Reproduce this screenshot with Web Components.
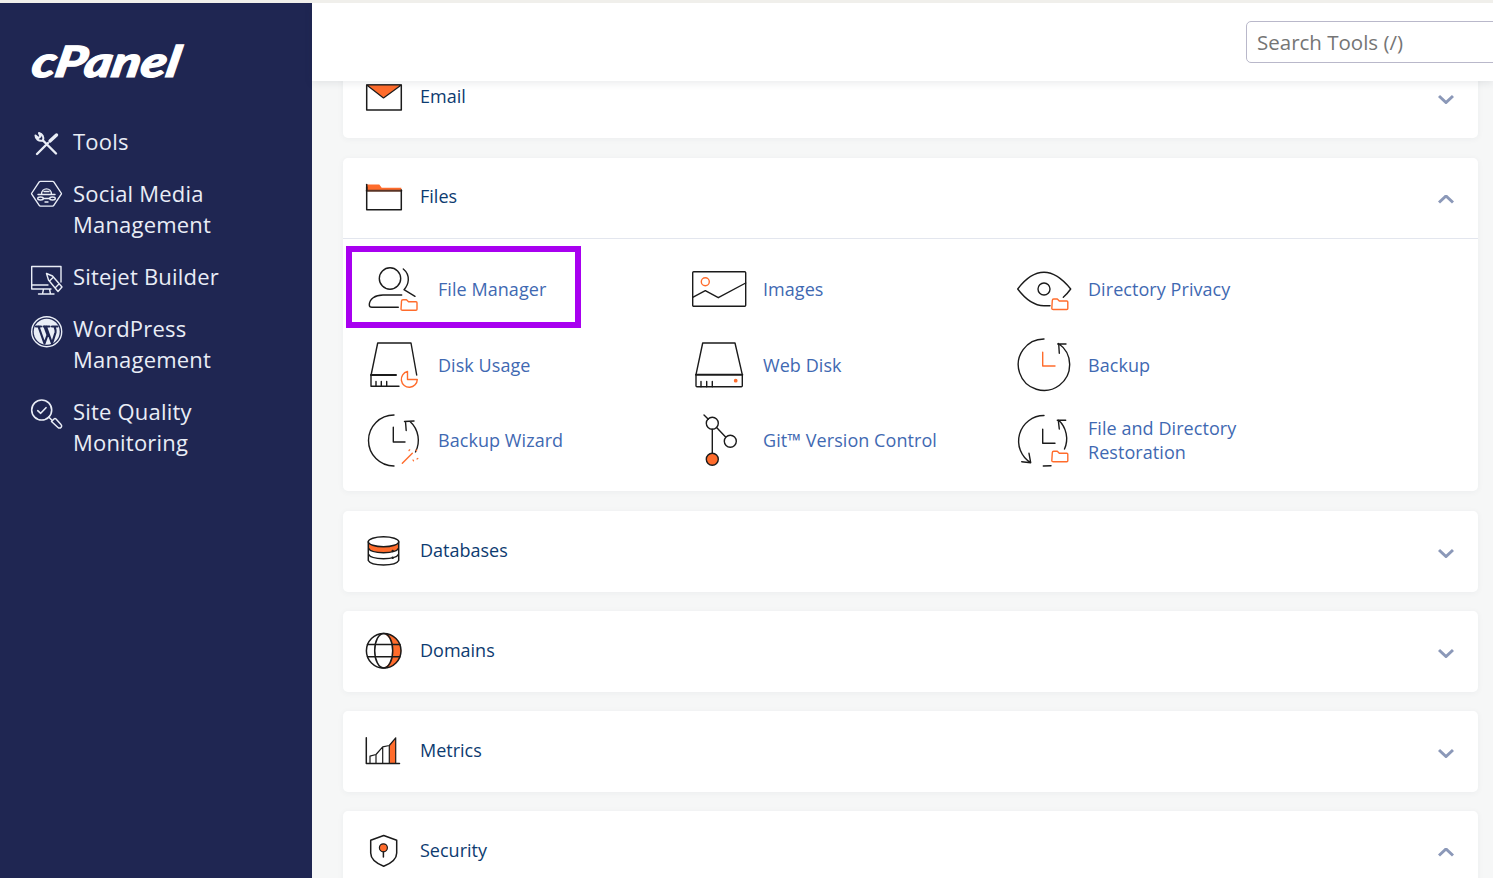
<!DOCTYPE html>
<html lang="en">
<head>
<meta charset="utf-8">
<title>cPanel - Tools</title>
<style>
html, body { margin: 0; height: 878px; overflow: hidden; }
body {
  padding-top: 3px;
  box-sizing: border-box;
  background: #f0efeb;
  font-family: "Open Sans", "Liberation Sans", sans-serif;
}
</style>
</head>
<body>
<cp-app>
  <cp-sidebar slot="side">
    <cp-nav-item icon="tools">Tools</cp-nav-item>
    <cp-nav-item icon="social">Social Media<br>Management</cp-nav-item>
    <cp-nav-item icon="sitejet">Sitejet Builder</cp-nav-item>
    <cp-nav-item icon="wordpress">WordPress<br>Management</cp-nav-item>
    <cp-nav-item icon="quality">Site Quality<br>Monitoring</cp-nav-item>
  </cp-sidebar>
  <cp-topbar slot="top"></cp-topbar>
  <cp-card heading="Email" icon="email"></cp-card>
  <cp-card heading="Files" icon="files" open style="margin:1px 0">
    <cp-tool icon="filemanager" highlight>File Manager</cp-tool>
    <cp-tool icon="images">Images</cp-tool>
    <cp-tool icon="privacy">Directory Privacy</cp-tool>
    <cp-tool icon="diskusage">Disk Usage</cp-tool>
    <cp-tool icon="webdisk">Web Disk</cp-tool>
    <cp-tool icon="backup">Backup</cp-tool>
    <cp-tool icon="wizard">Backup Wizard</cp-tool>
    <cp-tool icon="git">Git™ Version Control</cp-tool>
    <cp-tool icon="restore">File and Directory<br>Restoration</cp-tool>
  </cp-card>
  <cp-card heading="Databases" icon="databases"></cp-card>
  <cp-card heading="Domains" icon="domains"></cp-card>
  <cp-card heading="Metrics" icon="metrics"></cp-card>
  <cp-card heading="Security" icon="security" up></cp-card>
</cp-app>

<script>
const ORANGE = '#ff6c2c';
const folder = (x, y) =>
  `<path stroke="${ORANGE}" d="M${x} ${y + 1.5}q0-1.5 1.5-1.5h3.5l2 2h7.5q1 0 1 1v6.5q0 1-1 1h-13.5q-1.5 0-1.5-1z"/>`;

// Icons are drawn on the box they occupy in the page, so 1 unit is 1px
const ICONS = {
  tools: [31, `<path stroke-width="2.4" d="M25 26.500 12 13.500M6 27l11-11"/><path stroke-width="2" d="M4.500 8.500c0 3.500 3 6 7.500 5 1-3.500-.5-6.500-4-7.500l1.500 3.500-2 1.500z"/><path stroke-width="3.400" d="M19 14l6.500-6"/>`],
  social: [31, `<path d="M9.500 3.500h12a1.500 1.500 0 0 1 1.300.7l7.500 12a1 1 0 0 1 0 1l-7.500 12a1.500 1.500 0 0 1-1.300.7h-12a1.500 1.500 0 0 1-1.300-.7l-7.500-12a1 1 0 0 1 0-1l7.500-12a1.500 1.500 0 0 1 1.300-.7z" transform="translate(0 -1) scale(1 .94)"/><path d="M10.500 15.500c0-7.500 10-7.500 10 0M7 15.500h17M13 12.500h5M14 23h3"/><ellipse cx="9.500" cy="19.500" rx="2.800" ry="1.500"/><ellipse cx="21.500" cy="19.500" rx="2.800" ry="1.500"/><path d="M12.500 19.500h6"/>`],
  sitejet: [31, `<path d="M30 20V4.500H.7V27H20M.7 23H17M12.500 27l-1 5M18.500 27l1 5M7.500 32H23"/><path d="M15.500 11.500 21.500 14l9.500 11-4 4.500L17.500 18zM19 18.500l3-3M25 25l3-3"/>`],
  wordpress: [31, `<circle cx="15.700" cy="17.700" r="15"/><circle cx="15.700" cy="17.700" r="13" fill="currentColor" stroke="none"/><path d="M5 12.500h5M12.500 12.500h6M21 12.500h5.500M7.500 12.500l6 17 3-8.500-3-8.500M15 12.500l6 17 3.500-11c.7-2.500-.5-4-1-6" stroke="#1f2652" stroke-width="2.200"/>`],
  quality: [31, `<circle cx="10.700" cy="13" r="10" stroke-width="1.600"/><path d="M6.700 13.700l3 2.600 5.300-5.600" stroke-width="1.600"/><path d="M17.700 20l3 3M20.500 24.500l2.500-2.500a1.500 1.500 0 0 1 2 0l5 5.500a2 2 0 0 1-3 3l-6.500-6z" stroke-width="1.500"/>`],

  email: [36, `<path d="M.7 6h34.600v25H.7z" stroke-width="1.500"/><path fill="${ORANGE}" stroke-width="1.200" d="M.7 6h34.600L17.500 19z"/>`],
  files: [36, `<path fill="${ORANGE}" stroke="none" d="M.7 5.500h12.600l2.400 3.200h19.600V11H.7z"/><path d="M.7 11.700h34.600" stroke="#5b3526" stroke-width="2"/><path d="M.7 8V30.700h34.600V11" stroke-width="1.500"/><path d="M.7 5.500V11" stroke-width="1.500"/>`],
  databases: [36, `<path fill="${ORANGE}" stroke="none" d="M2.300 8.700V15c3 6.300 27.400 6.300 30.400 0V8.700z"/><ellipse cx="17.500" cy="8.700" rx="15.200" ry="5" fill="#fff" stroke-width="1.500"/><path d="M2.300 8.700V27.500c3 6 27.400 6 30.400 0V8.700M2.300 15c3 6.300 27.400 6.300 30.400 0M2.300 21c3 6.300 27.400 6.300 30.400 0" stroke-width="1.500"/><circle cx="26.700" cy="18" r=".5"/><circle cx="26.700" cy="24.700" r=".5"/>`],
  domains: [36, `<path fill="${ORANGE}" stroke="none" d="M18 .4a17.300 17.300 0 0 1 0 34.600c6-4 9-10 9-17.300S24 4.400 18 .4z"/><circle cx="17.700" cy="17.700" r="17.300" stroke-width="1.500"/><ellipse cx="17.700" cy="17.700" rx="9" ry="17.300" stroke-width="1.500"/><path d="M1.500 11.500h32.400M1.500 23.800h32.400" stroke-width="1.500"/>`],
  metrics: [36, `<path fill="${ORANGE}" stroke="none" d="M23.300 12.500 29.700 4.800v25.700h-6.400z"/><path d="M.3 4.800v25.700H33.500" stroke-width="1.500"/><path d="M4 30.500v-7.300l6-1.700 6.700-7.700 6.600-1.300 6.400-7.700v25.700M10 21.500v9M16.700 13.800v16.700M23.300 12.500v18" stroke-width="1.200"/>`],
  security: [36, `<path d="M17.700 2.500 30.700 7.200V20c0 6-6 10.500-13 13.200C10.700 30.500 4.700 26 4.700 20V7.200z" stroke-width="1.500"/><circle cx="17.400" cy="14.800" r="4" fill="${ORANGE}" stroke-width="1.200"/><path d="M17.400 19v5" stroke-width="1.500"/>`],

  filemanager: [56, `<circle cx="24" cy="17.500" r="10.700"/><path d="M37.300 8C41 11 42.500 15 42.300 19c-.3 4-1.800 7-4.300 9.700L49 35.300M35.700 34H17C9 34 3.300 38 3.300 44q0 2.300 2.700 2.300h26.300"/>${folder(35.5, 38.7)}`],
  images: [56, `<rect x="1.700" y="10.700" width="53" height="34.600" rx="1"/><circle cx="14.300" cy="20.700" r="4" stroke="${ORANGE}"/><path d="M1.700 36.300 14.300 29.700l13 7L54.700 22"/>`],
  privacy: [56, `<path d="M34 44.700h-6C16 44.700 7 35 1.700 28 7 21 16 11.300 28 11.300S49 21 54.700 28c-2 2.800-4.500 5.800-7.400 8.300"/><circle cx="28" cy="28" r="6"/>${folder(36.3, 38)}`],
  diskusage: [56, `<g transform="translate(0 1)"><path d="M33 48.300H5V37.500L11.700 5H45l5.700 32"/><path d="M5 37h25" stroke-width="2"/><path d="M10 43.500v4.800M15.300 43.500v4.800M20.700 43.500v4.800"/><path stroke="${ORANGE}" d="M41.500 33.500a8 8 0 1 0 9.800 8h-9.800z"/></g>`],
  webdisk: [56, `<path d="M5 37.700 11.700 6H44l7.300 31.700v11q0 1-1 1H6q-1 0-1-1z"/><path d="M5 37.700h46.300" stroke-width="2"/><path d="M10 44.500v5.200M15.700 44.500v5.200M21.300 44.500v5.200"/><circle cx="44.700" cy="43.700" r="1.200" stroke="${ORANGE}" fill="${ORANGE}"/>`],
  backup: [56, `<g transform="translate(0 1)"><path d="M28 1A25.700 25.700 0 1 0 42.500 5.500M41.700 6H50M42.700 6l.6 9.300"/><path stroke="${ORANGE}" d="M26.700 14.300V28H39"/></g>`],
  // the last row is 2px shorter than the others, so its icons sit 1 unit lower
  wizard: [56, `<g transform="translate(0 1)"><path d="M28 2A25.500 25.500 0 1 0 28 53M44 8.500c9 8 10.500 21 5.500 30.500M38.500 8.500l9.500-.5M39.500 8.500l.7 9M27.300 14.300V29H39"/><path stroke="${ORANGE}" d="M36.300 50.300 46.300 40.300"/><path stroke="${ORANGE}" stroke-width="1.200" stroke-dasharray="1 2.500" d="M43 37.500l2-2M50 37l1 1M51 46l1.500-1M47 47l1 1.500"/></g>`],
  git: [56, `<g transform="translate(0 1)"><path d="M13 2l4.300 4.300M21.300 16.300v24M25.600 14.600 34.600 24"/><circle cx="21.300" cy="10.300" r="6"/><circle cx="39.300" cy="28.300" r="6"/><circle cx="21.300" cy="46.300" r="6" fill="${ORANGE}"/></g>`],
  restore: [56, `<g transform="translate(0 1)"><path d="M28 2.500A25.500 25.500 0 0 0 14.700 49.700M5.700 48.700 14.700 49.700 13 40.300M27.300 53l7.700-.3M42.500 7A25.500 25.500 0 0 1 48.500 36M41.300 7.300h8.400M42.300 7.300l1 8.700M26.700 16.300v14H39"/>${folder(36.3, 38.3)}</g>`],
};

const iconTemplate = document.createElement('template');
iconTemplate.innerHTML = `<style>
:host { display: block; flex: none; line-height: 0; }
svg { display: block; overflow: visible; }
</style>`;

class CpIcon extends HTMLElement {
  constructor() {
    super();
    this.attachShadow({ mode: 'open' });
    this.shadowRoot.appendChild(iconTemplate.content.cloneNode(true));
  }

  connectedCallback() {
    const [size, body] = ICONS[this.getAttribute('name')];
    const wrap = document.createElement('div');
    // the sidebar icons are drawn in the text colour, the rest in near black
    wrap.innerHTML = `<svg width="${size}" height="${size}" viewBox="0 0 ${size} ${size}" fill="none"
      stroke="${size === 31 ? 'currentColor' : '#1b1b1b'}" stroke-width="1.400"
      stroke-linecap="round" stroke-linejoin="round">${body}</svg>`;
    this.shadowRoot.appendChild(wrap.firstElementChild);
  }
}
customElements.define('cp-icon', CpIcon);

const appTemplate = document.createElement('template');
appTemplate.innerHTML = `<style>
:host { display: flex; height: 875px; overflow: hidden; }
.main { flex: 1; min-width: 0; display: flex; flex-direction: column; background: #f6f7f7; }
.scroll { flex: 1; min-height: 0; overflow: hidden; padding: 0 15px 0 31px; margin-top: -24px;
  display: flex; flex-direction: column; gap: 19px; }
.top { position: relative; z-index: 2; }
</style>
<slot name="side"></slot>
<div class="main">
  <div class="top"><slot name="top"></slot></div>
  <div class="scroll"><slot></slot></div>
</div>`;

class CpApp extends HTMLElement {
  constructor() {
    super();
    this.attachShadow({ mode: 'open' });
    this.shadowRoot.appendChild(appTemplate.content.cloneNode(true));
  }
}
customElements.define('cp-app', CpApp);

const sidebarTemplate = document.createElement('template');
sidebarTemplate.innerHTML = `<style>
:host { display: block; flex: none; width: 312px; box-sizing: border-box; background: #1f2652;
  padding: 38px 0 0 31px; color: #e9edf6; }
.logo { height: 43px; margin-bottom: 43px; }
.logo span { display: inline-block; transform-origin: 0 50%; transform: scaleX(1.22) skewX(-9deg);
  font: italic 900 43px/40px Lato, "Open Sans", sans-serif; color: #fff;
  -webkit-text-stroke: 1.200px #fff; margin-left: 2px; }
nav { display: flex; flex-direction: column; gap: 21px; margin-top: -1px; }
</style>
<div class="logo"><span>cPanel</span></div>
<nav><slot></slot></nav>`;

class CpSidebar extends HTMLElement {
  constructor() {
    super();
    this.attachShadow({ mode: 'open' });
    this.shadowRoot.appendChild(sidebarTemplate.content.cloneNode(true));
  }
}
customElements.define('cp-sidebar', CpSidebar);

class CpNavItem extends HTMLElement {
  constructor() {
    super();
    this.attachShadow({ mode: 'open' });
    this.shadowRoot.innerHTML = `<style>
:host { display: flex; gap: 11px; font-size: 22px; line-height: 31px; letter-spacing: .2px; }
cp-icon { margin: 1px 0 -1px; }
</style>
<cp-icon name="${this.getAttribute('icon')}"></cp-icon>
<div><slot></slot></div>`;
  }
}
customElements.define('cp-nav-item', CpNavItem);

class CpTopbar extends HTMLElement {
  constructor() {
    super();
    this.attachShadow({ mode: 'open' });
    this.shadowRoot.innerHTML = `<style>
:host { display: flex; justify-content: flex-end; align-items: center; height: 78px; overflow: hidden;
  background: #fff; box-shadow: 0 2px 8px rgba(40, 50, 70, .1); }
.search { flex: none; width: 260px; height: 42px; box-sizing: border-box; margin: -1px -13px 0 0;
  padding-left: 10px; border: 1px solid #b9b8ca; border-radius: 5px; background: #fff;
  color: #757575; font-size: 20.500px; line-height: 40px; white-space: nowrap; }
</style>
<div class="search" role="searchbox">Search Tools (/)</div>`;
  }
}
customElements.define('cp-topbar', CpTopbar);

class CpCard extends HTMLElement {
  constructor() {
    super();
    this.attachShadow({ mode: 'open' });
    const open = this.hasAttribute('open');
    const up = open || this.hasAttribute('up');
    this.shadowRoot.innerHTML = `<style>
:host { display: block; flex: none; background: #fff; border-radius: 5px; box-shadow: 0 1px 6px rgba(40, 50, 70, .05); }
header { display: flex; align-items: center; gap: 18px; height: 81px; box-sizing: border-box; padding: 0 24px 2px 23px;
  color: #0d3b70; font-size: 18px; }
header.open { border-bottom: 1px solid #e3e6ee; }
h2 { flex: 1; margin: -2px 0 0; font: inherit; }
svg { display: block; margin-top: 5px; }
.grid { display: grid; grid-template-columns: repeat(3, 325px); grid-template-rows: 76px 76px 74px; padding: 12px 3px 14px; }
</style>
<header class="${open ? 'open' : ''}">
  <cp-icon name="${this.getAttribute('icon')}"></cp-icon>
  <h2>${this.getAttribute('heading')}</h2>
  <svg width="16" height="10" viewBox="0 0 16 10" fill="none" stroke="#8b98b8" stroke-width="3">
    <path d="${up ? 'M1 7.500 8 1 15 7.500' : 'M1 2 8 8.500 15 2'}"/>
  </svg>
</header>
${open ? '<div class="grid"><slot></slot></div>' : ''}`;
  }
}
customElements.define('cp-card', CpCard);

class CpTool extends HTMLElement {
  constructor() {
    super();
    this.attachShadow({ mode: 'open' });
    const mark = this.hasAttribute('highlight') ? '<div class="mark"></div>' : '';
    this.shadowRoot.innerHTML = `<style>
:host { display: flex; align-items: center; gap: 16px; box-sizing: border-box; padding-left: 20px;
  position: relative; color: #3f69b2; font-size: 18px; line-height: 24px; letter-spacing: .06px; }
.mark { position: absolute; left: 0; top: -5px; width: 235px; height: 82px; box-sizing: border-box;
  border: 6px solid #a800f0; }
</style>
${mark}
<cp-icon name="${this.getAttribute('icon')}"></cp-icon>
<div><slot></slot></div>`;
  }
}
customElements.define('cp-tool', CpTool);
</script>
</body>
</html>
